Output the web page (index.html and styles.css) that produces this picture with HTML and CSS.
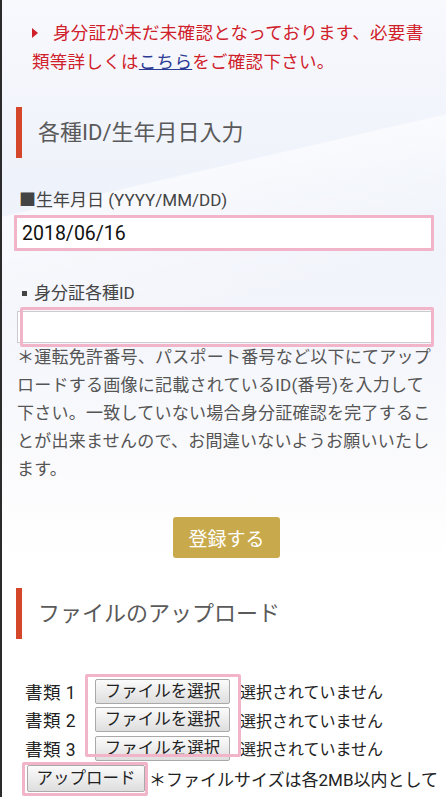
FILE: index.html
```html
<!DOCTYPE html>
<html lang="ja">
<head>
  <meta charset="UTF-8" />
  <meta name="viewport" content="width=device-width, initial-scale=1" />
  <title>身分証確認</title>
  <link rel="stylesheet" href="styles.css">
</head>
<body>
  <div class="page">
    <!-- Warning notice -->
    <p class="notice">身分証が未だ未確認となっております、必要書類等詳しくは<a href="#">こちら</a>をご確認下さい。</p>

    <!-- ID / birthday -->
    <h2 class="sec-title">各種ID/生年月日入力</h2>
    <form class="id-form">
      <label class="field-label">■生年月日 (YYYY/MM/DD)</label>
      <input class="text-input marked" type="text" value="2018/06/16">

      <label class="field-label label-id"><span class="dot"></span>身分証各種ID</label>
      <div class="input-wrap">
        <input class="text-input plain" type="text">
        <span class="mark mark-id"></span>
      </div>

      <p class="note">＊運転免許番号、パスポート番号など以下にてアップロードする画像に記載されているID(番号)を入力して下さい。一致していない場合身分証確認を完了することが出来ませんので、お間違いないようお願いいたします。</p>

      <div class="submit-row">
        <button type="button" class="btn-gold">登録する</button>
      </div>
    </form>

    <!-- File upload -->
    <h2 class="sec-title">ファイルのアップロード</h2>
    <div class="files">
      <div class="file-row">
        <span class="file-label">書類 1</span>
        <button type="button" class="btn-sys">ファイルを選択</button>
        <span class="file-state">選択されていません</span>
      </div>
      <div class="file-row">
        <span class="file-label">書類 2</span>
        <button type="button" class="btn-sys">ファイルを選択</button>
        <span class="file-state">選択されていません</span>
      </div>
      <div class="file-row">
        <span class="file-label">書類 3</span>
        <button type="button" class="btn-sys">ファイルを選択</button>
        <span class="file-state">選択されていません</span>
      </div>
      <span class="mark mark-files"></span>

      <div class="upload-row">
        <span class="upload-wrap">
          <button type="button" class="btn-sys btn-upload">アップロード</button>
          <span class="mark mark-upload"></span>
        </span>
        <span class="upload-note">＊ファイルサイズは各2MB以内として</span>
      </div>
    </div>
  </div>
</body>
</html>
```

FILE: styles.css
```css
:root {
  --text-color: #555;
  --alert-red: #d0212b;
  --bar-red: #d4472a;
  --gold: #c8aa4c;
  --mark-pink: #f1b4c8;
}

html {
  margin: 0;
  background: #fff;
}

body {
  margin: 0;
  min-height: 100vh;
  overflow: hidden;
  border-left: 2px solid #2b2b2b;
  font-family: Roboto, "Noto Sans CJK JP", sans-serif;
  color: var(--text-color);
  /* faint blue sweep behind the top of the page */
  background:
    linear-gradient(167deg, rgba(255,255,255,0) 0 24%, rgba(255,255,255,0.6) 24.2%, rgba(255,255,255,0) 40%),
    linear-gradient(180deg, #f8f9fd 0, #eef2fa 180px, #f3f5fb 320px, #fbfbfd 470px, #fff 560px);
}

.page {
  padding: 19px 12px 0 12px;
}

/* Notice */
.notice {
  margin: 0 0 0 18px;
  font-size: 17.5px;
  letter-spacing: 0.3px;
  line-height: 29px;
  color: var(--alert-red);
}

.notice::before {
  content: "";
  display: inline-block;
  width: 0;
  height: 0;
  border-top: 5px solid transparent;
  border-bottom: 5px solid transparent;
  border-left: 6px solid var(--alert-red);
  margin: 0 15px 1px 0;
}

.notice a {
  color: #2b3a94;
  text-decoration: underline;
}

/* Section titles */
.sec-title {
  margin: 30px 0 0 2px;
  padding-left: 16px;
  border-left: 6px solid var(--bar-red);
  font-size: 22px;
  font-weight: 400;
  line-height: 51px;
  color: #5a5a5a;
}

/* Form */
.id-form {
  display: flex;
  flex-direction: column;
}

.field-label {
  margin-top: 30px;
  padding-left: 5px;
  font-size: 17px;
  line-height: 24px;
  color: #444;
}

.label-id {
  display: flex;
  align-items: center;
  padding-left: 8px;
}

.dot {
  width: 5px;
  height: 5px;
  margin: 1px 7px 0 0;
  background: #444;
}

.text-input {
  box-sizing: border-box;
  width: 100%;
  font-family: inherit;
  font-size: 19.5px;
  color: #111;
  background: #fff;
  outline: none;
}

.marked {
  margin-top: 3px;
  height: 36px;
  padding: 0 5px;
  border: 3px solid var(--mark-pink);
  border-radius: 1px;
}

.input-wrap {
  position: relative;
  margin: 6px 0 0 3px;
}

.plain {
  display: block;
  height: 32px;
  border: 1px solid #ccc;
}

.mark {
  position: absolute;
  border: 3px solid var(--mark-pink);
  border-radius: 2px;
  pointer-events: none;
}

.mark-id {
  left: 3px;
  right: 0;
  top: -4px;
  bottom: -4px;
}

.note {
  margin: 0;
  padding-left: 3px;
  font-size: 17px;
  letter-spacing: 0.25px;
  line-height: 28px;
  color: #555;
}

.submit-row {
  display: flex;
  justify-content: center;
  margin-top: 34px;
  padding-left: 5px;
}

.btn-gold {
  width: 107px;
  height: 41px;
  border: none;
  border-radius: 3px;
  background: var(--gold);
  color: #fff;
  font-family: inherit;
  font-size: 19px;
  cursor: pointer;
}

/* Files */
.files {
  position: relative;
  margin-top: 38px;
  padding-left: 11px;
  font-size: 17.5px;
  color: #222;
}

.file-row {
  display: flex;
  align-items: center;
  height: 28.5px;
}

.file-label {
  width: 70px;
  letter-spacing: 0.5px;
}

.btn-sys {
  height: 25px;
  padding: 0;
  border: 1px solid #a9a9a9;
  border-radius: 2px;
  background: linear-gradient(#fbfbfb, #dedede);
  font-family: inherit;
  font-size: 16.5px;
  line-height: 23px;
  color: #222;
  white-space: nowrap;
}

.file-row .btn-sys {
  width: 135px;
}

.file-state {
  margin-left: 10px;
  font-size: 16px;
}

.mark-files {
  left: 71px;
  top: -3px;
  width: 150px;
  height: 77px;
}

.upload-row {
  display: flex;
  align-items: center;
  height: 31px;
  margin-left: -3px;
  white-space: nowrap;
}

.upload-wrap {
  position: relative;
  padding-left: 5px;
}

.btn-upload {
  display: block;
  width: 118px;
  height: 27px;
}

.mark-upload {
  left: 0;
  right: -3px;
  top: -3px;
  bottom: -4px;
}

.upload-note {
  margin-left: 4px;
  font-size: 17px;
}
```
